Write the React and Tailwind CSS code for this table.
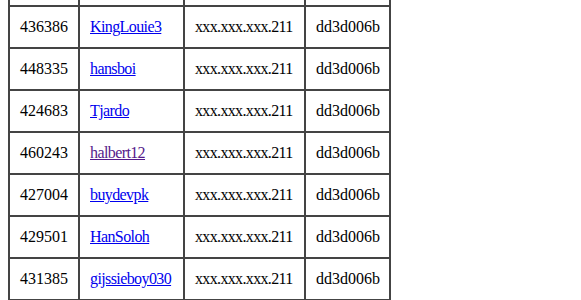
const rows = [
  ['', '', '', '', false],
  ['436386', 'KingLouie3', 'xxx.xxx.xxx.211', 'dd3d006b', false],
  ['448335', 'hansboi', 'xxx.xxx.xxx.211', 'dd3d006b', false],
  ['424683', 'Tjardo', 'xxx.xxx.xxx.211', 'dd3d006b', false],
  ['460243', 'halbert12', 'xxx.xxx.xxx.211', 'dd3d006b', true],
  ['427004', 'buydevpk', 'xxx.xxx.xxx.211', 'dd3d006b', false],
  ['429501', 'HanSoloh', 'xxx.xxx.xxx.211', 'dd3d006b', false],
  ['431385', 'gijssieboy030', 'xxx.xxx.xxx.211', 'dd3d006b', false],
]

export default function App(){
  const cell = "border-2 border-[#444] px-[10px] h-[42px] align-middle whitespace-nowrap"
  return (
    <div className="h-[300px] overflow-hidden bg-white text-black pl-2" style={{fontFamily:'"Liberation Serif", serif'}}>
      <table className="border-collapse table-fixed w-[383px] text-[16px] -mt-[37px]">
        <colgroup>
          <col className="w-[70px]" />
          <col className="w-[105px]" />
          <col className="w-[121px]" />
          <col className="w-[85px]" />
        </colgroup>
        <tbody>
          {rows.map(([id,name,ip,hash,visited],i)=>(
            <tr key={i}>
              <td className={cell}>{id}</td>
              <td className={cell + " tracking-[-0.6px]"}>
                {name && <a href="#" className={visited ? "underline text-[#551a8b]" : "underline text-[#0000ee]"}>{name}</a>}
              </td>
              <td className={cell + " tracking-[-0.65px]"}>{ip}</td>
              <td className={cell}>{hash}</td>
            </tr>
          ))}
        </tbody>
      </table>
    </div>
  )
}
